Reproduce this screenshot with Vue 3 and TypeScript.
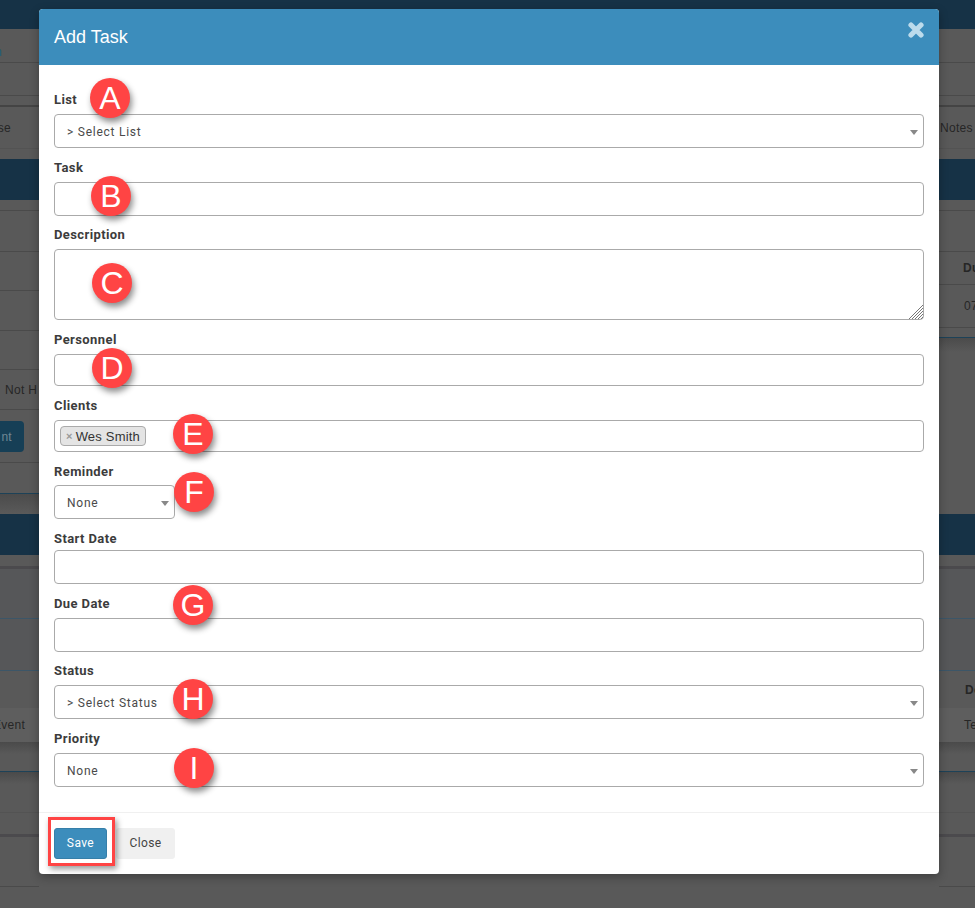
<script setup lang="ts">
interface Band { h: number; cls?: string; text?: string }
const leftBands: Band[] = [
  { h: 29, cls: 'navy' }, { h: 34, cls: 'line', text: 'n' }, { h: 33, cls: 'line' }, { h: 11, cls: 'dark' },
  { h: 42, cls: 'faint', text: 'se' }, { h: 10 }, { h: 41, cls: 'navy' }, { h: 11, cls: 'line' },
  { h: 41, cls: 'line' }, { h: 39, cls: 'line' }, { h: 40, cls: 'line' }, { h: 39, cls: 'line' },
  { h: 40, cls: 'line', text: 'Not H' }, { h: 11 }, { h: 31, cls: 'btnrow', text: 'nt' }, { h: 11, cls: 'line' },
  { h: 31, cls: 'navyline' }, { h: 20, cls: 'shade' }, { h: 41, cls: 'navy' }, { h: 11 }, { h: 3, cls: 'deep' },
  { h: 50, cls: 'blueline' }, { h: 52, cls: 'blueline' }, { h: 37 }, { h: 34, cls: 'light', text: 'Event' },
  { h: 30, cls: 'navyline shadow' }, { h: 41, cls: 'faint shadow' }, { h: 21 }, { h: 3, cls: 'deep' },
  { h: 50, cls: 'line' }, { h: 22 },
]
const rightBands: Band[] = [
  { h: 29, cls: 'navy' }, { h: 34, cls: 'line' }, { h: 33, cls: 'line' }, { h: 11, cls: 'dark' },
  { h: 42, cls: 'faint', text: 'Notes' }, { h: 10 }, { h: 41, cls: 'navy' }, { h: 11, cls: 'line' },
  { h: 41, cls: 'line' }, { h: 33, cls: 'line bold', text: 'Du' }, { h: 43, cls: 'line', text: '07' }, { h: 10, cls: 'navyline' },
  { h: 176, cls: 'shade-top' }, { h: 41, cls: 'navy' }, { h: 11 }, { h: 3, cls: 'deep' },
  { h: 50, cls: 'blueline' }, { h: 52, cls: 'blueline' }, { h: 37, cls: 'bold', text: 'De' }, { h: 34, cls: 'light', text: 'Te' },
  { h: 30, cls: 'navyline shadow' }, { h: 41, cls: 'faint shadow' }, { h: 21 }, { h: 3, cls: 'deep' },
  { h: 50, cls: 'line' }, { h: 22 },
]
interface Field { label: string; kind: 'select' | 'input' | 'area' | 'chips'; value?: string; gap: number; h: number; labelGap: number; narrow?: boolean }
const fields: Field[] = [
  { label: 'List', kind: 'select', value: '> Select List', gap: 0, h: 34, labelGap: 5 },
  { label: 'Task', kind: 'input', gap: 11, h: 34, labelGap: 5 },
  { label: 'Description', kind: 'area', gap: 10, h: 71, labelGap: 5 },
  { label: 'Personnel', kind: 'input', gap: 11, h: 32, labelGap: 5 },
  { label: 'Clients', kind: 'chips', gap: 11, h: 32, labelGap: 5 },
  { label: 'Reminder', kind: 'select', value: 'None', gap: 11, h: 34, labelGap: 4 },
  { label: 'Start Date', kind: 'input', gap: 11, h: 34, labelGap: 2 },
  { label: 'Due Date', kind: 'input', gap: 11, h: 34, labelGap: 5 },
  { label: 'Status', kind: 'select', value: '> Select Status', gap: 10, h: 34, labelGap: 5 },
  { label: 'Priority', kind: 'select', value: 'None', gap: 11, h: 34, labelGap: 5 },
]
fields[5].narrow = true
const pins = [
  { l: 'A', x: 110, y: 98 }, { l: 'B', x: 111, y: 196 }, { l: 'C', x: 112, y: 283 },
  { l: 'D', x: 112, y: 368 }, { l: 'E', x: 193, y: 434 }, { l: 'F', x: 194, y: 492 },
  { l: 'G', x: 193, y: 605 }, { l: 'H', x: 193, y: 699 }, { l: 'I', x: 194, y: 768 },
]
</script>

<template>
  <div class="page">
    <div class="strip strip-left">
      <div v-for="(b, i) in leftBands" :key="i" class="band" :class="b.cls" :style="{ height: b.h + 'px' }">
        <span v-if="b.text">{{ b.text }}</span>
      </div>
    </div>
    <div class="strip strip-mid">
      <div class="band navy mid-top"></div>
    </div>
    <div class="strip strip-right">
      <div v-for="(b, i) in rightBands" :key="i" class="band" :class="b.cls" :style="{ height: b.h + 'px' }">
        <span v-if="b.text">{{ b.text }}</span>
      </div>
    </div>

    <div class="modal">
      <header class="modal-head">
        <h4>Add Task</h4>
        <svg class="close-x" width="16" height="16" viewBox="0 0 16 16" aria-label="Close">
          <path d="M3 3 L13 13 M13 3 L3 13" stroke="#bcdbec" stroke-width="5.2" stroke-linecap="round" fill="none" />
        </svg>
      </header>
      <form class="modal-body" @submit.prevent>
        <div v-for="f in fields" :key="f.label" class="field" :style="{ marginTop: f.gap + 'px' }">
          <label :style="{ marginBottom: f.labelGap + 'px' }">{{ f.label }}</label>
          <div v-if="f.kind === 'select'" class="control select" :class="{ narrow: f.narrow }" :style="{ height: f.h + 'px' }">
            <span>{{ f.value }}</span><i class="caret"></i>
          </div>
          <input v-else-if="f.kind === 'input'" class="control" type="text" :style="{ height: f.h + 'px' }" />
          <div v-else-if="f.kind === 'area'" class="area-wrap">
            <textarea class="control area" :style="{ height: f.h + 'px' }"></textarea>
            <svg class="grip" width="16" height="16" viewBox="0 0 16 16">
              <path d="M1 15 L15 1 M4 15 L15 4 M7 15 L15 7 M10 15 L15 10 M13 15 L15 13" stroke="#777" stroke-width="1" fill="none" />
            </svg>
          </div>
          <div v-else class="control chips" :style="{ height: f.h + 'px' }">
            <span class="chip"><b>×</b>Wes Smith</span>
          </div>
        </div>
      </form>
      <footer class="modal-foot">
        <button class="btn save" type="button">Save</button>
        <button class="btn plain" type="button">Close</button>
        <div class="red-box"></div>
      </footer>
    </div>

    <div v-for="p in pins" :key="p.l" class="pin" :style="{ left: p.x - 20 + 'px', top: p.y - 20 + 'px' }">{{ p.l }}</div>
  </div>
</template>

<style>
html, body { margin: 0; background: #595959; }
</style>

<style scoped>
.page {
  position: relative;
  width: 975px;
  height: 908px;
  overflow: hidden;
  display: flex;
  background: #595959;
  font-family: "Liberation Sans", Arial, sans-serif;
}
.strip { display: flex; flex-direction: column; }
.strip-left { width: 39px; }
.strip-mid { width: 900px; }
.strip-right { width: 36px; }
.mid-top { height: 29px; flex: none; }
.band {
  box-sizing: border-box;
  flex: none;
  display: flex;
  align-items: center;
  font-size: 12px;
  letter-spacing: 0.3px;
  color: #262626;
  white-space: nowrap;
  overflow: hidden;
}
.strip-left .band { justify-content: flex-end; padding-right: 29px; }
.strip-right .band { padding-left: 1px; }
.strip-right .bold { padding-left: 24px; font-weight: 700; }
.navy { background: #163246; }
.line { border-bottom: 1px solid #4a4a4a; }
.dark { border-bottom: 2px solid #444; }
.faint { border-bottom: 1px solid #535353; }
.blueline { border-bottom: 1px solid #3c5668; background: #565759; }
.navyline { border-bottom: 1px solid #1d4258; }
.deep { background: #4b4a4d; }
.light { background: #5e5e5e; }
.shade { background: linear-gradient(#4b4b4b, #5a5a5a); }
.shade-top { background: linear-gradient(#4b4b4b, #595959 14px); }
.shadow { background-image: linear-gradient(#4a4a4a, #595959 12px); }
.strip-left .btnrow {
  background: #163f56;
  color: #6f8794;
  border-radius: 0 4px 4px 0;
  margin-right: 15px;
  padding-right: 12px;
}
.strip-left .band:nth-child(2) { color: #1e5f80; padding: 12px 37px 0 0; }
.strip-left .band:nth-child(5) { padding-right: 28px; }
.strip-left .band:nth-child(13) { justify-content: flex-start; padding-left: 5px; padding-right: 0; }
.strip-left .band:nth-child(25) { justify-content: flex-start; padding: 0; }
.strip-left .band:nth-child(25) span { margin-left: -7px; }
.strip-right .band:nth-child(11) { padding-left: 25px; }
.strip-right .band:nth-child(20) { padding-left: 25px; }
.strip-right .band:nth-child(19) { padding-left: 26px; }

.modal {
  position: absolute;
  left: 39px;
  top: 9px;
  width: 900px;
  height: 865px;
  background: #fff;
  border-radius: 4px;
  box-shadow: 0 3px 10px rgba(0, 0, 0, 0.3);
  display: flex;
  flex-direction: column;
  color: #333;
}
.modal-head {
  height: 56px;
  flex: none;
  background: #3c8dbc;
  border-radius: 4px 4px 0 0;
  display: flex;
  justify-content: space-between;
  padding: 0 15px;
  box-sizing: border-box;
}
.modal-head h4 {
  margin: 0;
  font-size: 18px;
  font-weight: 400;
  color: #fff;
  line-height: 56px;
}
.close-x { margin: 13px 0 0; }
.modal-body {
  flex: none;
  height: 748px;
  box-sizing: border-box;
  padding: 26px 15px 0;
  border-bottom: 1px solid #f0f0f0;
}
.field { display: flex; flex-direction: column; align-items: stretch; }
.field label {
  height: 18px;
  line-height: 18px;
  font-family: Roboto, "Liberation Sans", sans-serif;
  font-size: 13px;
  font-weight: 700;
  letter-spacing: 0.4px;
  color: #3c3c3c;
}
.control {
  box-sizing: border-box;
  width: 100%;
  margin: 0;
  border: 1px solid #aaa;
  border-radius: 4px;
  background: #fff;
  display: block;
  outline: none;
}
.area-wrap { position: relative; display: flex; }
.area { resize: none; }
.grip { position: absolute; right: 0; bottom: 0; pointer-events: none; }
.select {
  display: flex;
  align-items: center;
  justify-content: space-between;
  padding: 1px 5px 0 12px;
  font-family: Roboto, "Liberation Sans", sans-serif;
  font-size: 12px;
  color: #4a4a4a;
  letter-spacing: 0.75px;
}
.select.narrow { width: 121px; }
.caret {
  width: 0;
  height: 0;
  border-left: 4px solid transparent;
  border-right: 4px solid transparent;
  border-top: 5px solid #888;
  margin-top: 1px;
}
.chips { display: flex; align-items: flex-start; padding: 5px 0 0 5px; }
.chip {
  box-sizing: border-box;
  height: 20px;
  padding: 0 5px;
  display: inline-flex;
  align-items: center;
  background: #e4e4e4;
  border: 1px solid #aaa;
  border-radius: 4px;
  font-size: 13px;
  letter-spacing: 0.2px;
  color: #333;
}
.chip b { color: #999; margin-right: 3px; font-size: 11px; }
.modal-foot {
  position: relative;
  flex: 1;
  display: flex;
  align-items: flex-start;
  gap: 9px;
  padding: 15px;
  box-sizing: border-box;
}
.btn {
  box-sizing: border-box;
  height: 31px;
  border-radius: 3px;
  font-family: Roboto, "Liberation Sans", sans-serif;
  font-size: 12px;
  letter-spacing: 0.4px;
  padding: 0 0 2px;
  margin: 0;
}
.save { width: 53px; background: #3c8dbc; border: 1px solid #367fa9; color: #fff; }
.plain { width: 59px; background: #f0f0f0; border: 1px solid #f0f0f0; color: #444; }
.red-box {
  position: absolute;
  left: 9px;
  top: 4px;
  width: 67px;
  height: 49px;
  box-sizing: border-box;
  border: 3px solid #ff4444;
  box-shadow: 2px 3px 6px rgba(0, 0, 0, 0.4);
}
.pin {
  position: absolute;
  width: 40px;
  height: 40px;
  border-radius: 50%;
  background: #ff4444;
  color: #fff;
  font-size: 32px;
  line-height: 40px;
  text-align: center;
  box-shadow: 2px 4px 6px rgba(0, 0, 0, 0.45);
}
</style>
